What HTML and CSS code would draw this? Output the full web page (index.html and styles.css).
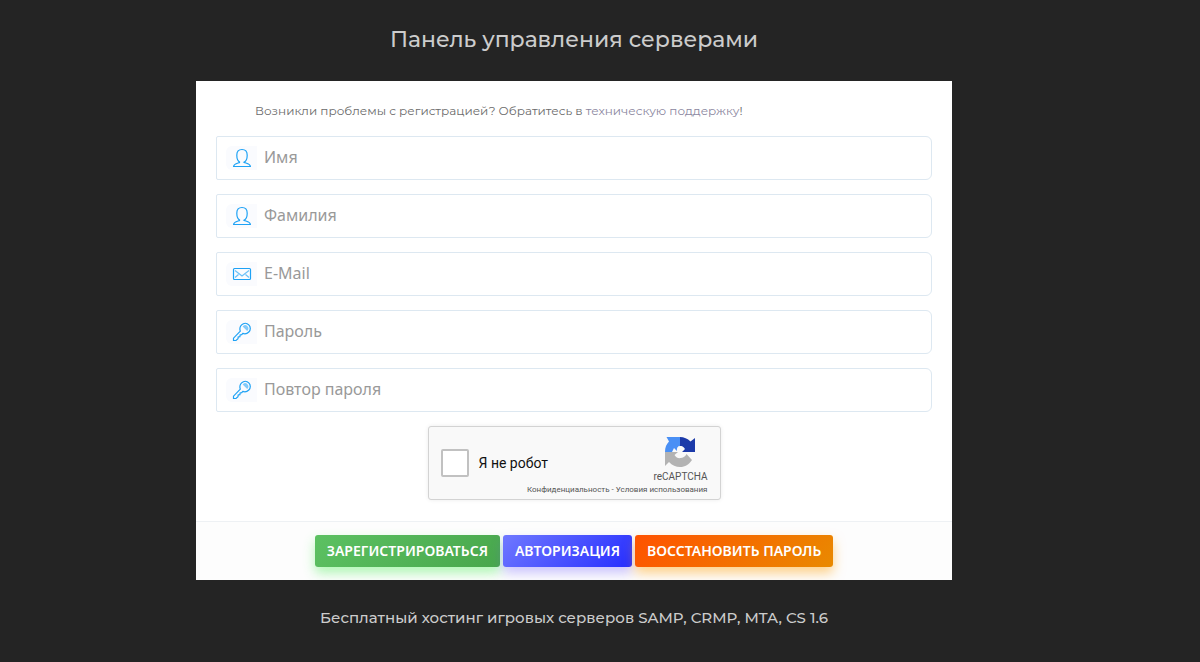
FILE: index.html
```html
<!DOCTYPE html>
<html lang="ru">
<head>
<meta charset="utf-8">
<title>Панель управления серверами</title>
<link rel="stylesheet" href="styles.css">
</head>
<body>
<svg class="sprite" aria-hidden="true">
  <symbol id="user" viewBox="0 0 20 20">
    <path d="M8 14.200C6 13.400 4.800 10.500 4.800 7.200C4.800 3.800 6.800 1.500 10 1.500S15.200 3.800 15.200 7.200C15.200 10.500 14 13.400 12 14.200C13.500 15.200 18.200 15.300 18.400 18.500H1.600C1.800 15.300 6.500 15.200 8 14.200"/>
  </symbol>
  <symbol id="mail" viewBox="0 0 20 20">
    <rect x="1.500" y="4.500" width="17" height="11" rx="1"/>
    <path stroke-opacity=".65" d="M3 6.500L10 12L17 6.500M3 13.500L6.500 10.500M17 13.500L13.500 10.500"/>
  </symbol>
  <symbol id="key" viewBox="0 0 20 20">
    <path d="M8.300 9.200C7.400 6.700 8 4.500 9.600 2.900C11.700 .9 14.800 .9 16.800 2.900S18.800 8 16.800 10C15.200 11.600 13 12.200 10.800 11.400L9.700 12.700L8.100 13L7.900 14.700L6.200 15L6 16.700L4 18.500H1.500V16.200Z"/>
    <path stroke-opacity=".55" d="M11.500 4.500C12.500 3.500 14 3.600 15 4.600S16.200 7.200 15.200 8.200ZM12.500 3.800L16 7.500"/>
  </symbol>
</svg>
<main class="page">
  <h1 class="title">Панель управления серверами</h1>
  <form class="card">
    <div class="card-body">
      <p class="help">Возникли проблемы с регистрацией? Обратитесь в <a href="#">техническую поддержку</a>!</p>
      <label class="field"><span class="field-icon"><svg class="icon"><use href="#user"/></svg></span><input type="text" placeholder="Имя" aria-label="Имя"></label>
      <label class="field"><span class="field-icon"><svg class="icon"><use href="#user"/></svg></span><input type="text" placeholder="Фамилия" aria-label="Фамилия"></label>
      <label class="field"><span class="field-icon"><svg class="icon"><use href="#mail"/></svg></span><input type="email" placeholder="E-Mail" aria-label="E-Mail"></label>
      <label class="field"><span class="field-icon"><svg class="icon"><use href="#key"/></svg></span><input type="password" placeholder="Пароль" aria-label="Пароль"></label>
      <label class="field"><span class="field-icon"><svg class="icon"><use href="#key"/></svg></span><input type="password" placeholder="Повтор пароля" aria-label="Повтор пароля"></label>
      <div class="captcha">
        <label class="captcha-check"><input type="checkbox"> Я не робот</label>
        <div class="captcha-brand">
          <svg class="captcha-logo" viewBox="0 0 30 30" aria-hidden="true">
            <path fill="#4a90f5" d="M15 0V9C12.500 9 11.500 11 12 14L9 11L7 15H0C0 10.500 1.400 7.200 4 4.500L1.500 0Z"/>
            <path fill="#1c3aa9" d="M15 0C19 0 22.500 1.500 25.500 4.500L30 1V15H17L20 12C18.500 9.500 17 9 15 9Z"/>
            <path fill="#b3b3b3" d="M0 15H13L9.500 18C11.500 21 13.500 21.500 16 21C19 20.500 20.500 19 21.500 17L27 23C24 27.500 20 30 15 30C11 30 7 28.500 4 25L0 29Z"/>
          </svg>
          <span class="captcha-name">reCAPTCHA</span>
        </div>
        <div class="captcha-links"><a href="#">Конфиденциальность</a> - <a href="#">Условия использования</a></div>
      </div>
    </div>
    <div class="actions">
      <button class="btn btn-green" type="submit">ЗАРЕГИСТРИРОВАТЬСЯ</button>
      <button class="btn btn-blue" type="button">АВТОРИЗАЦИЯ</button>
      <button class="btn btn-orange" type="button">ВОССТАНОВИТЬ ПАРОЛЬ</button>
    </div>
  </form>
  <p class="tagline">Бесплатный хостинг игровых серверов SAMP, CRMP, MTA, CS 1.6</p>
</main>
</body>
</html>
```
FILE: styles.css
```css
* { box-sizing: border-box; }
body {
  margin: 0;
  min-height: 100vh;
  background: #242424;
  font-family: Montserrat, Inter, sans-serif;
}
.sprite { display: none; }
.page {
  display: flex;
  flex-direction: column;
  align-items: center;
  padding: 24px 52px 24px 0;
  color: #ccc;
}
.title { margin: 0 0 25px; font-size: 22px; line-height: 32px; font-weight: 500; }
.card {
  width: 66%;
  max-width: 756px;
  background: #fff;
  overflow: hidden;
}
.card-body {
  display: flex;
  flex-direction: column;
  gap: 14px;
  padding: 20px 20px 21px;
}
.help { margin: 0 39px 1px; font-size: 12px; line-height: 20px; color: #6b6b6b; }
.help a { color: #8b87a0; text-decoration: none; }
.field {
  display: flex;
  align-items: center;
  height: 44px;
  padding-left: 9px;
  border: 1px solid #dde8f1;
  border-radius: 2px 6px 6px 2px;
}
.field-icon {
  display: flex;
  align-items: center;
  justify-content: center;
  width: 31px;
  height: 24px;
  border-radius: 6px 0 0 6px;
  background: #fafbfe;
}
.icon { width: 20px; height: 20px; fill: none; stroke: #1ea2f5; stroke-width: 1.2; }
.field input {
  flex: 1;
  min-width: 0;
  height: 40px;
  padding: 0 7px 2px;
  border: 0;
  outline: 0;
  background: transparent;
  color: #555;
  font: 16px/24px "Noto Sans", sans-serif;
}
.field input::placeholder { color: #999; opacity: 1; }
.captcha {
  display: grid;
  grid-template-columns: 1fr auto;
  align-self: center;
  width: 293px;
  height: 74px;
  padding: 10px 12px 2px;
  border: 1px solid #d3d3d3;
  border-radius: 3px;
  background: #f9f9f9;
  box-shadow: 0 0 4px rgba(0, 0, 0, .08);
  font-family: Roboto, sans-serif;
}
.captcha-check { display: flex; align-items: center; gap: 10px; padding-top: 4px; font-size: 14px; color: #111; }
.captcha-check input {
  appearance: none;
  width: 28px;
  height: 28px;
  margin: 0;
  border: 2px solid #c1c1c1;
  border-radius: 2px;
  background: #fff;
}
.captcha-brand { display: flex; flex-direction: column; align-items: center; gap: 4px; }
.captcha-logo { width: 30px; height: 30px; }
.captcha-name { font-size: 10px; line-height: 12px; color: #555; }
.captcha-links { grid-column: 1 / -1; text-align: right; font-size: 8px; line-height: 12px; color: #555; }
.captcha-links a { color: inherit; text-decoration: none; }
.actions {
  display: flex;
  justify-content: center;
  gap: 3px;
  padding: 13px 20px;
  border-top: 1px solid #eef1f4;
  background: #fdfdfd;
}
.btn {
  height: 32px;
  padding: 0 12px;
  border: 0;
  border-radius: 3px;
  color: #fff;
  font: 600 14px/20px "Noto Sans", sans-serif;
  white-space: nowrap;
}
.btn-green { background: linear-gradient(135deg, #5cc162, #48a74c); box-shadow: 0 6px 12px rgba(80, 240, 90, .45); }
.btn-blue { background: linear-gradient(135deg, #6f78ff, #262eff); box-shadow: 0 6px 12px rgba(110, 90, 255, .35); }
.btn-orange { background: linear-gradient(135deg, #ff5200, #e98a00); box-shadow: 0 6px 12px rgba(255, 165, 20, .5); }
.tagline { margin: 26px 0 0; font-size: 15px; line-height: 24px; font-weight: 500; text-align: center; }
```
